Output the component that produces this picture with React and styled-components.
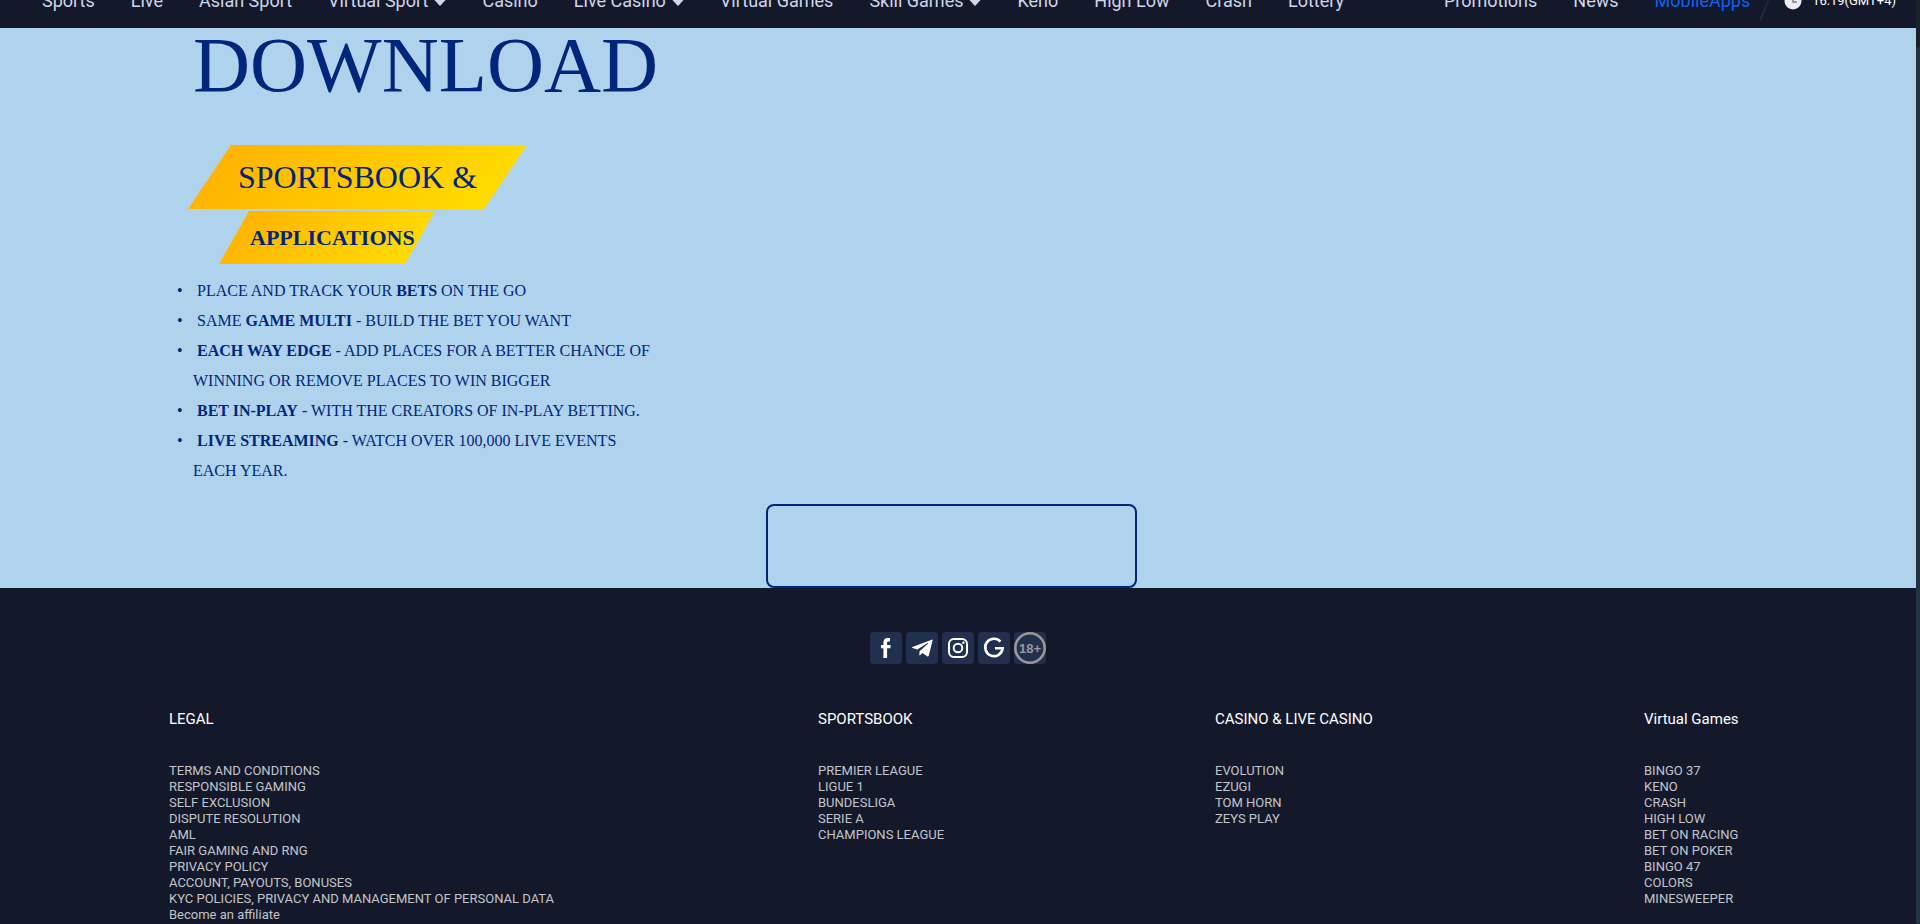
import React from "react";
import styled, { createGlobalStyle, css } from "styled-components";

const navy = "#00267c";
const dark = "#13192b";

const GlobalStyle = createGlobalStyle`
  *, *::before, *::after { box-sizing: border-box; }
  body { margin: 0; background: ${dark}; }
  a { color: inherit; text-decoration: none; }
  ul { list-style: none; margin: 0; padding: 0; }
  h1, h2, h3, p { margin: 0; font-weight: 400; }
`;

const Viewport = styled.div`
  display: grid;
  grid-template-columns: minmax(0, 1fr) 4px;
  height: 100vh;
  overflow: hidden;
  font-family: Roboto, "Liberation Sans", sans-serif;
`;

const Page = styled.div`
  overflow: hidden;
  background: ${dark};
`;

const ScrollTrack = styled.div`
  padding-top: 47px;
  background: #18222b;
`;

const ScrollThumb = styled.div`
  height: 100%;
  border-radius: 4px;
  background: #233341;
`;

const Header = styled.header`
  display: flex;
  justify-content: space-between;
  height: 54px;
  margin-top: -26px;
  padding: 0 20px 0 24px;
  line-height: 54px;
  background: ${dark};
`;

const NavGroup = styled.nav`
  display: flex;
  align-items: center;
`;

const NavLink = styled.a`
  display: flex;
  align-items: center;
  gap: 6px;
  padding: 0 18px;
  font-size: 18px;
  white-space: nowrap;
  color: ${(p) => (p.$active ? "#0d63f3" : "#cfd6ea")};
`;

const Slash = styled.svg`
  width: 16px;
  height: 40px;
  margin-left: -8px;
`;

const Clock = styled.time`
  display: flex;
  align-items: center;
  gap: 10px;
  padding-left: 8px;
  font-size: 13px;
  white-space: nowrap;
  color: #fff;
`;

const Hero = styled.main`
  display: flex;
  flex-direction: column;
  padding-left: 177px;
  color: ${navy};
  background: #afd3ec;
  font-family: "Liberation Serif", serif;
`;

const Title = styled.h1`
  padding-left: 16px;
  font-size: 79px;
  line-height: 73px;
`;

const Ribbons = styled.div`
  display: flex;
  flex-direction: column;
  align-items: flex-start;
  gap: 2px;
  padding: 44px 0 12px 11px;
`;

const Ribbon = styled.h2`
  background: linear-gradient(135deg, #ffae00, #ffe200);
  ${(p) =>
    p.$small
      ? css`
          width: 216px;
          margin-left: 31px;
          padding: 1px 0 0 31px;
          font-size: 22px;
          font-weight: 700;
          line-height: 52px;
          clip-path: polygon(30px 0, 100% 0, calc(100% - 30px) 100%, 0 100%);
        `
      : css`
          width: 339px;
          padding-left: 50px;
          font-size: 32px;
          line-height: 64px;
          clip-path: polygon(43px 0, 100% 0, calc(100% - 43px) 100%, 0 100%);
        `}
`;

const Features = styled.ul`
  width: 480px;
  font-size: 16px;
  line-height: 30px;
`;

const Feature = styled.li`
  padding-left: 16px;
  text-indent: -16px;

  &::before {
    content: "•";
    display: inline-block;
    width: 20px;
    text-indent: 0;
  }
`;

const StoreBox = styled.div`
  align-self: center;
  width: 371px;
  height: 84px;
  margin: 18px 190px 0 0;
  border: 2px solid ${navy};
  border-radius: 8px;
`;

const Footer = styled.footer`
  padding: 44px 169px 0;
`;

const Social = styled.div`
  display: flex;
  justify-content: center;
  gap: 4px;
`;

const SocialLink = styled.a`
  width: 32px;
  height: 32px;
  border-radius: 4px;
  background: #22304f;

  svg { display: block; width: 32px; height: 32px; }
`;

const Columns = styled.div`
  display: grid;
  grid-template-columns: 649fr 397fr 429fr 103fr;
  margin-top: 45px;
  white-space: nowrap;
`;

const ColumnTitle = styled.h3`
  margin-bottom: 34px;
  font-size: 15px;
  line-height: 20px;
  color: #fff;
`;

const ColumnLink = styled.a`
  display: block;
  font-size: 13px;
  line-height: 16px;
  color: #c3c5ca;
`;

const mainLinks = [
  ["Sports"], ["Live"], ["Asian Sport"], ["Virtual Sport", true], ["Casino"],
  ["Live Casino", true], ["Virtual Games"], ["Skill Games", true], ["Keno"],
  ["High Low"], ["Crash"], ["Lottery"],
];

const columns = [
  ["LEGAL", ["TERMS AND CONDITIONS", "RESPONSIBLE GAMING", "SELF EXCLUSION", "DISPUTE RESOLUTION", "AML", "FAIR GAMING AND RNG", "PRIVACY POLICY", "ACCOUNT, PAYOUTS, BONUSES", "KYC POLICIES, PRIVACY AND MANAGEMENT OF PERSONAL DATA", "Become an affiliate"]],
  ["SPORTSBOOK", ["PREMIER LEAGUE", "LIGUE 1", "BUNDESLIGA", "SERIE A", "CHAMPIONS LEAGUE"]],
  ["CASINO & LIVE CASINO", ["EVOLUTION", "EZUGI", "TOM HORN", "ZEYS PLAY"]],
  ["Virtual Games", ["BINGO 37", "KENO", "CRASH", "HIGH LOW", "BET ON RACING", "BET ON POKER", "BINGO 47", "COLORS", "MINESWEEPER"]],
];

const Caret = () => (
  <svg width="12" height="12" viewBox="0 0 12 12" aria-hidden="true">
    <path d="M1 4.500h10L6 10z" fill="#cfd6ea" stroke="#cfd6ea" strokeWidth="1.500" strokeLinejoin="round" />
  </svg>
);

const socials = [
  ["Facebook", <path key="f" fill="#fff" d="M13.4 26v-9.8H11v-3.3h2.4v-2.100c0-3 1.6-4.8 4.500-4.800H20v3.4h-1.500c-1.100 0-1.400.5-1.400 1.500v2h3.600l-.4 3.300h-3.200V26z" />],
  ["Telegram", <path key="t" fill="#fff" d="M26.4 7.4 6.4 15c-.5.3-.5.7 0 .9l5 1.6 10.2-6.4c.5-.3.8 0 .5.3l-8.500 7.800-.3 4.300c.4 0 .7-.2 1-.5l2.200-2.100 4.600 3.400c.8.5 1.400.2 1.700-.8L26.700 8z" />],
  ["Instagram", (
    <g key="i" fill="none" stroke="#fff" strokeWidth="2">
      <rect x="7" y="7" width="18" height="18" rx="5" />
      <circle cx="16" cy="16" r="4.300" />
      <circle cx="21.400" cy="10.700" r="1.200" fill="#fff" stroke="none" />
    </g>
  )],
  ["Google", <path key="g" fill="none" stroke="#fff" strokeWidth="2.600" d="M22.400 9.600A8.700 8.700 0 1 0 24.600 16.300H17" />],
  ["18+", (
    <g key="a">
      <circle cx="16" cy="16" r="14.700" fill="none" stroke="#999" strokeWidth="2.600" />
      <text x="16" y="20.500" textAnchor="middle" fontFamily="Liberation Sans, sans-serif" fontWeight="700" fontSize="13" fill="#999">18+</text>
    </g>
  )],
];

export default function App() {
  return (
    <Viewport>
      <GlobalStyle />
      <Page>
        <Header>
          <NavGroup aria-label="Games">
            {mainLinks.map(([label, menu]) => (
              <NavLink href="#" key={label}>{label}{menu && <Caret />}</NavLink>
            ))}
          </NavGroup>
          <NavGroup aria-label="Information">
            <NavLink href="#">Promotions</NavLink>
            <NavLink href="#">News</NavLink>
            <NavLink href="#" $active>MobileApps</NavLink>
            <Slash viewBox="0 0 16 40" aria-hidden="true">
              <path d="M16 0 0 40" stroke="#1f2738" strokeWidth="2" />
            </Slash>
            <Clock>
              <svg width="18" height="18" viewBox="0 0 18 18" aria-hidden="true">
                <circle cx="9" cy="9" r="8.500" fill="#ececec" />
                <path d="M9 4v6h4" fill="none" stroke="#7b7f88" strokeWidth="1.500" />
              </svg>
              16:19(GMT+4)
            </Clock>
          </NavGroup>
        </Header>
        <Hero>
          <Title>DOWNLOAD</Title>
          <Ribbons>
            <Ribbon>SPORTSBOOK &amp;</Ribbon>
            <Ribbon $small>APPLICATIONS</Ribbon>
          </Ribbons>
          <Features>
            <Feature>PLACE AND TRACK YOUR <b>BETS</b> ON THE GO</Feature>
            <Feature>SAME <b>GAME MULTI</b> - BUILD THE BET YOU WANT</Feature>
            <Feature><b>EACH WAY EDGE</b> - ADD PLACES FOR A BETTER CHANCE OF WINNING OR REMOVE PLACES TO WIN BIGGER</Feature>
            <Feature><b>BET IN-PLAY</b> - WITH THE CREATORS OF IN-PLAY BETTING.</Feature>
            <Feature><b>LIVE STREAMING</b> - WATCH OVER 100,000 LIVE EVENTS EACH YEAR.</Feature>
          </Features>
          <StoreBox />
        </Hero>
        <Footer>
          <Social>
            {socials.map(([name, art]) => (
              <SocialLink href="#" key={name} aria-label={name}>
                <svg viewBox="0 0 32 32">{art}</svg>
              </SocialLink>
            ))}
          </Social>
          <Columns>
            {columns.map(([title, links]) => (
              <section key={title}>
                <ColumnTitle>{title}</ColumnTitle>
                <ul>
                  {links.map((l) => <li key={l}><ColumnLink href="#">{l}</ColumnLink></li>)}
                </ul>
              </section>
            ))}
          </Columns>
        </Footer>
      </Page>
      <ScrollTrack><ScrollThumb /></ScrollTrack>
    </Viewport>
  );
}
